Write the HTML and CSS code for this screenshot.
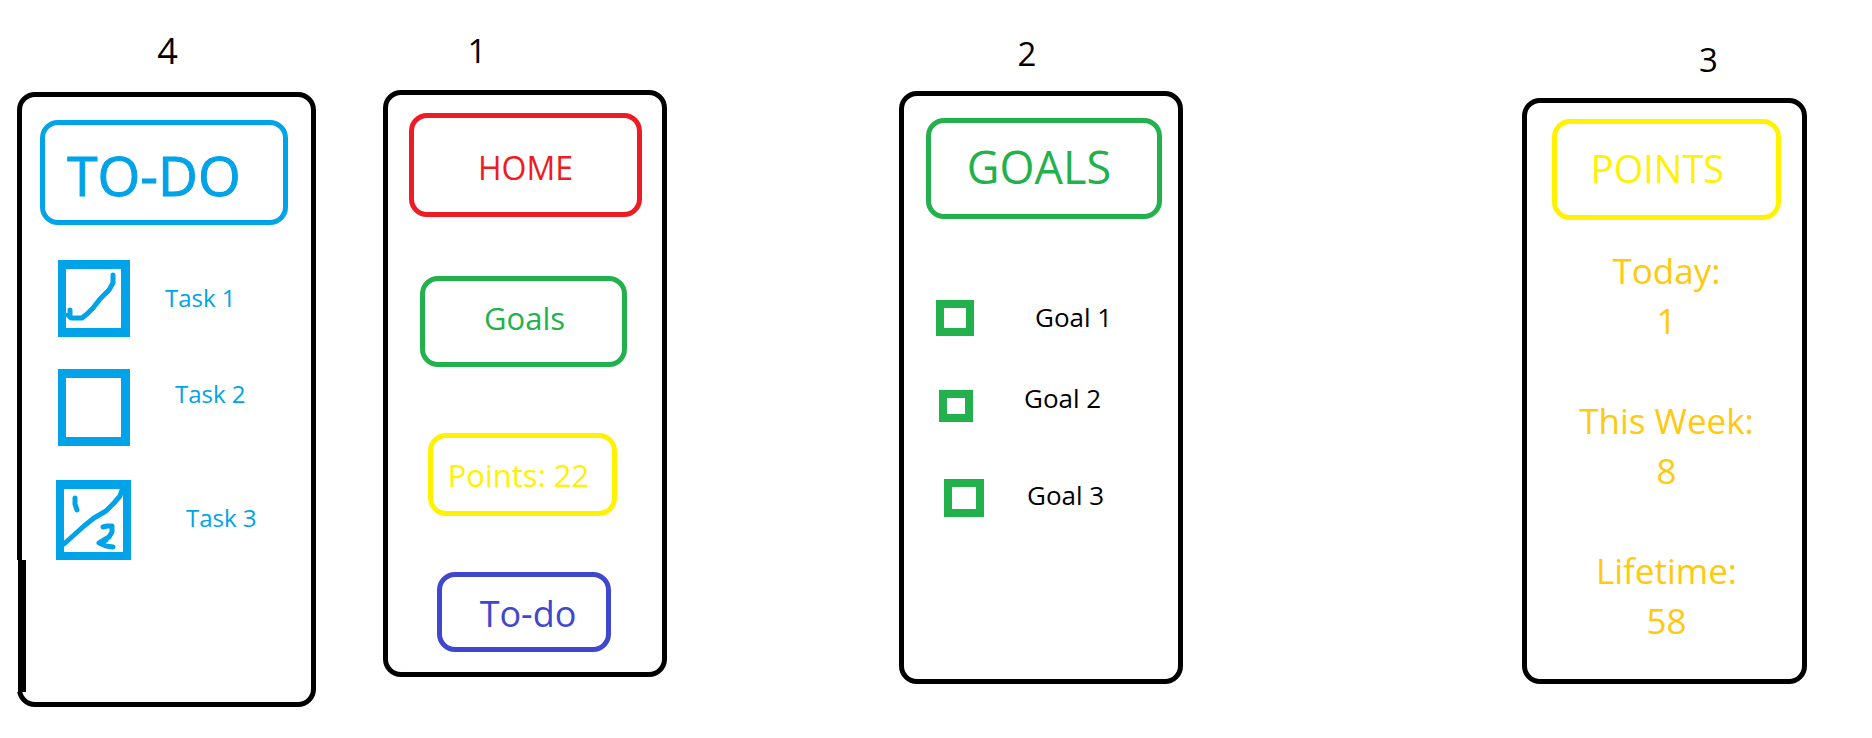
FILE: index.html
```html
<!DOCTYPE html>
<html lang="en">
<head>
<meta charset="utf-8">
<title>App screens</title>
<link rel="stylesheet" href="styles.css">
</head>
<body>
<main class="board">
  <section class="screen screen-todo">
    <p class="number">4</p>
    <div class="phone">
      <h2 class="box title">TO-DO</h2>
      <ul class="list">
        <li class="row">
          <span class="check">
            <input type="checkbox" id="task1" checked>
            <svg class="mark" viewBox="0 0 72 77" aria-hidden="true"><path d="M12 50v5h-2l3 3h11l5-4 6-6 7-9 9-9 4-7v-8"/></svg>
          </span>
          <label for="task1">Task 1</label>
        </li>
        <li class="row">
          <span class="check"><input type="checkbox" id="task2"></span>
          <label for="task2">Task 2</label>
        </li>
        <li class="row">
          <span class="check">
            <input type="checkbox" id="task3">
            <svg class="mark" viewBox="0 0 75 80" aria-hidden="true"><path d="M8 64L18 55 28 46 38 38 50 31 58 23 64 16 66 10M19 18v6l2 6M47 47l4-1h5v6l-3 5-10 6 7 3 7 1M50 60l-5 3"/></svg>
          </span>
          <label for="task3">Task 3</label>
        </li>
      </ul>
    </div>
  </section>

  <section class="screen screen-home">
    <p class="number">1</p>
    <div class="phone">
      <h1 class="box title">HOME</h1>
      <button type="button" class="box to-goals">Goals</button>
      <button type="button" class="box to-points">Points: 22</button>
      <button type="button" class="box to-todo">To-do</button>
    </div>
  </section>

  <section class="screen screen-goals">
    <p class="number">2</p>
    <div class="phone">
      <h2 class="box title">GOALS</h2>
      <ul class="list">
        <li class="row"><input type="checkbox" id="goal1"><label for="goal1">Goal 1</label></li>
        <li class="row"><input type="checkbox" id="goal2"><label for="goal2">Goal 2</label></li>
        <li class="row"><input type="checkbox" id="goal3"><label for="goal3">Goal 3</label></li>
      </ul>
    </div>
  </section>

  <section class="screen screen-points">
    <p class="number">3</p>
    <div class="phone">
      <h2 class="box title">POINTS</h2>
      <dl class="stats">
        <div><dt>Today:</dt><dd>1</dd></div>
        <div><dt>This Week:</dt><dd>8</dd></div>
        <div><dt>Lifetime:</dt><dd>58</dd></div>
      </dl>
    </div>
  </section>
</main>
</body>
</html>
```
FILE: styles.css
```css
* { box-sizing: border-box; }

body {
  margin: 0;
  background: #fff;
  color: #000;
  font-family: "Open Sans", "Noto Sans", sans-serif;
}

h1, h2, p, ul, dl, dd { margin: 0; padding: 0; }
ul { list-style: none; }

.board {
  display: grid;
  grid-template-columns: 299fr 67fr 284fr 232fr 284fr 339fr 285fr;
  align-items: start;
  padding: 0 65px 0 17px;
}

.screen-todo { grid-column: 1; padding-top: 31px; }
.screen-home { grid-column: 3; padding-top: 31px; }
.screen-goals { grid-column: 5; padding-top: 34px; }
.screen-points { grid-column: 7; padding-top: 40px; }

.number {
  margin-bottom: 18px;
  font-size: 33px;
  line-height: 40px;
  text-align: center;
}
.screen-todo .number { margin-bottom: 21px; padding-left: 2px; font-size: 36px; }
.screen-home .number { margin-bottom: 19px; padding-right: 96px; }
.screen-goals .number { margin-bottom: 17px; padding-right: 28px; }
.screen-points .number { padding-left: 88px; }

.phone {
  position: relative;
  display: flex;
  flex-direction: column;
  border: 5px solid #000;
  border-radius: 18px;
}

.box {
  display: flex;
  align-items: center;
  justify-content: center;
  border: 5px solid currentColor;
  border-radius: 18px;
  background: none;
  font-family: inherit;
  font-weight: 400;
  line-height: 1;
  white-space: nowrap;
}

input[type="checkbox"] {
  appearance: none;
  display: block;
  flex: none;
  margin: 0;
  border: 8px solid currentColor;
  background: #fff;
}

.row { display: flex; align-items: center; }
.row label { line-height: 32px; }

/* To-do */
.screen-todo .phone { padding: 23px 23px 142px 18px; color: #00a2e8; border-color: #000; }
.screen-todo .phone::before {
  content: "";
  position: absolute;
  left: -5px;
  bottom: 10px;
  width: 8px;
  height: 132px;
  border-left: 1px solid #fff;
  background: #000;
}
.screen-todo .title { height: 105px; padding: 3px 20px 0 0; font-size: 55px; -webkit-text-stroke: 1px currentColor; }
.screen-todo .list { padding: 35px 0 0 18px; }
.screen-todo .row { gap: 35px; margin-bottom: 32px; font-size: 24px; }
.screen-todo .row label { padding-bottom: 2px; }
.screen-todo .row:nth-child(2) { gap: 45px; margin-bottom: 34px; }
.screen-todo .row:nth-child(2) label { padding-bottom: 27px; }
.screen-todo .row:nth-child(3) { gap: 55px; margin: 0 0 0 -2px; }
.screen-todo .row:nth-child(3) label { padding-bottom: 5px; }
.check { position: relative; }
.check input { width: 72px; height: 77px; border-width: 9px 9px 9px 8px; color: #00a2e8; }
.row:nth-child(3) .check input { width: 75px; height: 80px; border-width: 9px 8px 8px; }
.mark {
  position: absolute;
  inset: 0;
  width: 100%;
  height: 100%;
  fill: none;
  stroke: currentColor;
  stroke-width: 5;
  stroke-linecap: round;
  stroke-linejoin: round;
  pointer-events: none;
}

/* Home */
.screen-home .phone { padding: 18px 0 20px; }
.screen-home .box { font-size: 31px; }
.screen-home .title { height: 104px; margin: 0 20px 59px 21px; padding: 5px 0 0; color: #ed1c24; font-size: 32px; }
.screen-home .to-goals { height: 91px; margin: 0 35px 66px 32px; padding: 0 0 7px 2px; color: #22b14c; }
.screen-home .to-points { height: 83px; margin: 0 45px 56px 40px; padding: 1px 8px 0 0; color: #fff200; }
.screen-home .to-todo { height: 80px; margin: 0 51px 0 49px; padding: 4px 0 0 8px; color: #3f48cc; font-size: 36px; }

/* Goals */
.screen-goals .phone { padding: 22px 16px 162px 22px; }
.screen-goals .title { height: 101px; padding: 0 10px 5px 0; color: #22b14c; font-size: 45px; }
.screen-goals .list { padding: 81px 0 0 10px; }
.screen-goals input { width: 38px; height: 36px; color: #22b14c; }
.screen-goals .row { gap: 61px; margin-bottom: 54px; font-size: 26px; }
.screen-goals .row label { margin: -3px 0 0; }
.screen-goals .row:nth-child(2) { gap: 51px; margin: 0 0 57px 3px; }
.screen-goals .row:nth-child(2) input { width: 34px; height: 32px; }
.screen-goals .row:nth-child(2) label { margin: -16px 0 0; }
.screen-goals .row:nth-child(3) { gap: 43px; margin: 0 0 0 8px; }
.screen-goals .row:nth-child(3) input { width: 40px; height: 38px; }
.screen-goals .row:nth-child(3) label { padding-bottom: 4px; }

/* Points */
.screen-points .phone { padding: 16px 21px 33px 25px; }
.screen-points .title { height: 101px; padding: 0 18px 4px 0; color: #fff200; font-size: 38px; }
.stats {
  display: flex;
  flex-direction: column;
  gap: 50px;
  padding-top: 26px;
  color: #ffc90e;
  font-size: 35px;
  line-height: 50px;
  text-align: center;
  white-space: nowrap;
}
```
